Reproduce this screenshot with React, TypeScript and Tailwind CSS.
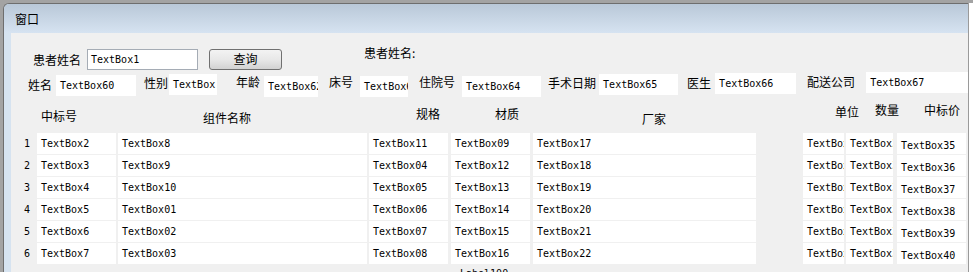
const mono = "font-['DejaVu_Sans_Mono',monospace] text-[10px] text-black";
const cjk = "font-['Noto_Sans_CJK_SC',sans-serif] text-[12px] text-black";

const cols = [
  "w-[79px]",
  "ml-[2px] w-[249px]",
  "ml-[2px] w-[79px]",
  "ml-[3px] w-[79px]",
  "ml-[3px] w-[223px]",
  "ml-[47px] w-[41px]",
  "ml-[2px] w-[47px]",
  "ml-[4px] w-[69px]",
];

const rows = [
  ["TextBox2", "TextBox8", "TextBox11", "TextBox09", "TextBox17", "TextBox23", "TextBox29", "TextBox35"],
  ["TextBox3", "TextBox9", "TextBox04", "TextBox12", "TextBox18", "TextBox24", "TextBox30", "TextBox36"],
  ["TextBox4", "TextBox10", "TextBox05", "TextBox13", "TextBox19", "TextBox25", "TextBox31", "TextBox37"],
  ["TextBox5", "TextBox01", "TextBox06", "TextBox14", "TextBox20", "TextBox26", "TextBox32", "TextBox38"],
  ["TextBox6", "TextBox02", "TextBox07", "TextBox15", "TextBox21", "TextBox27", "TextBox33", "TextBox39"],
  ["TextBox7", "TextBox03", "TextBox08", "TextBox16", "TextBox22", "TextBox28", "TextBox34", "TextBox40"],
];

function Box({ text, className }: { text: string; className: string }) {
  return (
    <div
      className={`h-[21px] shrink-0 overflow-hidden whitespace-nowrap bg-white pl-[4px] leading-[21px] ${mono} ${className}`}
    >
      {text}
    </div>
  );
}

export default function App() {
  return (
    <div className="flex h-[272px] w-[973px] overflow-hidden bg-[#a3a3a3] pl-[3px] pt-[3px]">
      <div className="flex min-w-0 flex-1 flex-col overflow-hidden rounded-tl-[6px] border-l border-t border-[#6e6e6e] bg-[#d6e3f0]">
        <div className="flex h-[29px] shrink-0 items-center bg-gradient-to-b from-[#b9c8d8] to-[#d6e3f1] pl-[11px]">
          <span className={`${cjk} text-[#333]`}>窗口</span>
        </div>

        <div className="flex min-h-0 flex-1 pl-[7px]">
          <div className="flex min-w-0 flex-1 flex-col overflow-hidden bg-[#f0f0f0]">
            {/* search row */}
            <div className="mt-[16px] flex h-[21px] shrink-0 items-start pl-[22px]">
              <span className={`${cjk} leading-[21px]`}>患者姓名</span>
              <div
                className={`ml-[6px] h-[21px] w-[111px] border border-[#a5acb5] bg-white pl-[3px] leading-[19px] ${mono}`}
              >
                TextBox1
              </div>
              <button className="ml-[11px] flex h-[21px] w-[73px] items-center justify-center rounded-[3px] border border-[#707070] bg-gradient-to-b from-[#f3f3f3] via-[#e8e8e8] to-[#d2d2d2]">
                <span className={`${cjk} -mt-[2px] leading-[16px]`}>查询</span>
              </button>
              <span className={`${cjk} -mt-[2px] ml-[82px] leading-[12px]`}>患者姓名:</span>
            </div>

            {/* patient info row */}
            <div className="mt-[3px] flex h-[24px] shrink-0 items-start pl-[17px]">
              <span className={`${cjk} mt-[4px] leading-[16px]`}>姓名</span>
              <Box text="TextBox60" className="ml-[4px] mt-[2px] w-[80px]" />
              <span className={`${cjk} ml-[8px] mt-[2px] leading-[16px]`}>性别</span>
              <Box text="TextBox" className="ml-[1px] mt-[1px] w-[48px]" />
              <span className={`${cjk} ml-[19px] mt-[1px] leading-[16px]`}>年龄</span>
              <Box text="TextBox62" className="ml-[4px] mt-[3px] w-[54px]" />
              <span className={`${cjk} ml-[11px] mt-[1px] leading-[16px]`}>床号</span>
              <Box text="TextBox63" className="ml-[7px] mt-[3px] w-[48px]" />
              <span className={`${cjk} ml-[11px] mt-[1px] leading-[16px]`}>住院号</span>
              <Box text="TextBox64" className="ml-[7px] mt-[3px] w-[79px]" />
              <span className={`${cjk} ml-[7px] mt-[2px] leading-[16px]`}>手术日期</span>
              <Box text="TextBox65" className="ml-[3px] mt-[1px] w-[79px]" />
              <span className={`${cjk} ml-[9px] mt-[2px] leading-[16px]`}>医生</span>
              <Box text="TextBox66" className="ml-[4px] mt-[0px] w-[81px]" />
              <span className={`${cjk} ml-[11px] mt-[1px] leading-[16px]`}>配送公司</span>
              <Box text="TextBox67" className="ml-[11px] -mt-[1px] flex-1" />
            </div>

            {/* table header */}
            <div className="mt-[3px] flex h-[33px] shrink-0 items-start pl-[30px]">
              <span className={`${cjk} mt-[8px] leading-[16px]`}>中标号</span>
              <span className={`${cjk} ml-[126px] mt-[10px] leading-[16px]`}>组件名称</span>
              <span className={`${cjk} ml-[165px] mt-[6px] leading-[16px]`}>规格</span>
              <span className={`${cjk} ml-[55px] mt-[6px] leading-[16px]`}>材质</span>
              <span className={`${cjk} ml-[123px] mt-[11px] leading-[16px]`}>厂家</span>
              <span className={`${cjk} ml-[169px] mt-[4px] leading-[16px]`}>单位</span>
              <span className={`${cjk} ml-[16px] mt-[2px] leading-[16px]`}>数量</span>
              <span className={`${cjk} ml-[25px] mt-[2px] leading-[16px]`}>中标价</span>
            </div>

            {/* table rows */}
            <div className="flex shrink-0 flex-col gap-[1px]">
              {rows.map((row, i) => (
                <div key={i} className="flex h-[21px]">
                  <div className={`w-[26px] shrink-0 pr-[7px] text-right leading-[21px] ${mono}`}>{i + 1}</div>
                  {row.map((cell, j) => (
                    <div
                      key={j}
                      className={`h-[21px] shrink-0 overflow-hidden whitespace-nowrap bg-white pl-[4px] ${mono} ${cols[j]} ${
                        j === 7 ? "pt-[2px] leading-[21px]" : "leading-[21px]"
                      }`}
                    >
                      {cell}
                    </div>
                  ))}
                </div>
              ))}
            </div>

            <div className={`mt-[4px] pl-[449px] leading-[12px] ${mono}`}>Label100</div>
          </div>
        </div>
      </div>
      <div className="w-[1px] shrink-0 bg-[#9a9a9a]" />
      <div className="w-[4px] shrink-0 bg-white" />
    </div>
  );
}
